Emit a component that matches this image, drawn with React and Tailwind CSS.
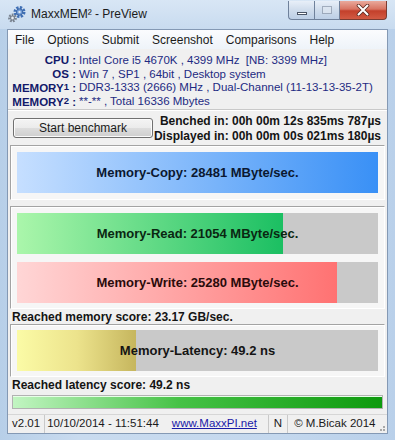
import React from 'react'

const sans = { fontFamily: '"Liberation Sans", Arial, sans-serif' }

function AppIcon() {
    return (
        <svg width="20" height="18" viewBox="0 0 20 18">
            <circle cx="12.5" cy="7" r="4.5" fill="none" stroke="#3f6fb5" strokeWidth="3" strokeDasharray="2.2 1.3" />
            <circle cx="12.5" cy="7" r="3.2" fill="#6f9ad6" stroke="#2f5a9a" strokeWidth="0.8" />
            <circle cx="12.5" cy="7" r="1.2" fill="#dce8f5" />
            <circle cx="5.5" cy="13" r="3.2" fill="none" stroke="#7b8592" strokeWidth="2.4" strokeDasharray="1.7 1.1" />
            <circle cx="5.5" cy="13" r="2.2" fill="#b8c0ca" stroke="#5d6672" strokeWidth="0.7" />
            <circle cx="5.5" cy="13" r="0.9" fill="#eef2f6" />
        </svg>
    )
}

function CaptionButtons() {
    return (
        <div className="mr-[8px] mt-[1px] flex h-[19px]">
            <div className="flex w-[26px] items-center justify-center rounded-bl-[4px] border border-r-0 border-t-0 border-[#6f819b] bg-[linear-gradient(to_bottom,#e8eff8,#cfdcec_50%,#bccfe6)]">
                <div className="mt-[6px] h-[3px] w-[10px] border border-[#4a5566] bg-white" />
            </div>
            <div className="flex w-[26px] items-center justify-center border border-t-0 border-[#6f819b] bg-[linear-gradient(to_bottom,#e8eff8,#cfdcec_50%,#bccfe6)]">
                <div className="h-[8px] w-[10px] border border-[#8a96a8] bg-[#dfe7f1] opacity-70" />
            </div>
            <div className="flex w-[47px] items-center justify-center rounded-br-[4px] border border-l-0 border-t-0 border-[#7a3b31] bg-[linear-gradient(to_bottom,#e9a99c,#d87462_45%,#c3402b_55%,#d25a43)]">
                <svg width="14" height="12" viewBox="0 0 14 12">
                    <path d="M2.5 1.5 L11.5 10.5 M11.5 1.5 L2.5 10.5" stroke="#5a2a22" strokeWidth="3.6" strokeLinecap="round" />
                    <path d="M2.5 1.5 L11.5 10.5 M11.5 1.5 L2.5 10.5" stroke="#ffffff" strokeWidth="2" strokeLinecap="round" />
                </svg>
            </div>
        </div>
    )
}

function InfoRow({ label, sup, value }) {
    return (
        <div className="flex h-[13.5px] items-center">
            <div className="w-[68px] shrink-0 text-right font-bold text-[#12196a]">
                {label}{sup && <span className="text-[9.5px] align-[2px]">{sup}</span>} :
            </div>
            <div className="whitespace-pre pl-[3px] text-[#1d2a82]">{value}</div>
        </div>
    )
}

function Bar({ label, bg, color }) {
    return (
        <div className={`flex h-[41px] items-center justify-center text-[13px] font-bold ${bg} ${color}`}>
            {label}
        </div>
    )
}

const panelCls = "mx-[2px] border border-b-white border-l-[#a3a3a3] border-r-white border-t-[#a3a3a3] bg-[#f6f6f6] px-[6px] shadow-[inset_1px_1px_0_#ffffff]"

export default function App() {
    return (
        <div style={sans} className="flex h-[440px] w-[395px] flex-col overflow-hidden bg-[linear-gradient(to_right,#b7cfe8,#c9dbef_20%,#c4d8ee_70%,#b9d0ea)] text-[#1a1a1a]">
            {/* title bar */}
            <div className="flex h-[29px] shrink-0 items-start justify-between bg-[linear-gradient(to_bottom,#d8e6f5,#c8dbef)]">
                <div className="flex items-center pl-[7px] pt-[5px]">
                    <AppIcon />
                    <span className="ml-[4px] text-[12px] text-[#1c1c1c]">MaxxMEM² - PreView</span>
                </div>
                <CaptionButtons />
            </div>

            {/* client */}
            <div className="mx-[7px] flex h-[405px] shrink-0 flex-col border border-[#8499b4] bg-[#f0f0f0]">
                {/* menu */}
                <div className="flex h-[19px] shrink-0 items-center gap-[13px] bg-[linear-gradient(to_bottom,#fbfcfe,#eef3f9)] pl-[7px] text-[12px] text-[#1a1a1a]">
                    <span>File</span>
                    <span>Options</span>
                    <span>Submit</span>
                    <span>Screenshot</span>
                    <span>Comparisons</span>
                    <span>Help</span>
                </div>

                {/* system info */}
                <div className="h-[61px] shrink-0 border-b border-[#c9c9c9] pt-[5px] text-[11.5px] leading-[13.5px] shadow-[0_1px_0_#ffffff]">
                    <InfoRow label="CPU" value="Intel Core i5 4670K , 4399 MHz  [NB: 3399 MHz]" />
                    <InfoRow label="OS" value="Win 7 , SP1 , 64bit , Desktop system" />
                    <InfoRow label="MEMORY" sup="1" value="DDR3-1333 (2666) MHz , Dual-Channel (11-13-13-35-2T)" />
                    <InfoRow label="MEMORY" sup="2" value="**-** , Total 16336 Mbytes" />
                </div>

                {/* benchmark row */}
                <div className="flex h-[35px] shrink-0 items-center justify-between pl-[5px] pr-[6px]">
                    <button className="h-[20px] w-[140px] shrink-0 rounded-[3px] border border-[#707070] bg-[linear-gradient(to_bottom,#f4f4f4,#ebebeb_50%,#dddddd_50%,#cfcfcf)] text-[12px] text-[#1a1a1a] shadow-[inset_0_0_0_1px_#fbfbfb]">
                        Start benchmark
                    </button>
                    <div className="whitespace-nowrap pt-[2px] text-right text-[12px] font-bold leading-[15px] text-[#141414]">
                        <div>Benched in: 00h 00m 12s 835ms 787µs</div>
                        <div>Displayed in: 00h 00m 00s 021ms 180µs</div>
                    </div>
                </div>

                {/* copy */}
                <div className={`${panelCls} h-[55px] shrink-0 py-[6px]`}>
                    <Bar label="Memory-Copy: 28481 MByte/sec." bg="bg-[linear-gradient(to_right,#c6dfff,#3990f6)]" color="text-[#0b1830]" />
                </div>

                {/* read / write */}
                <div className={`${panelCls} mt-[6px] flex h-[103px] shrink-0 flex-col gap-[8px] pb-[5px] pt-[6px]`}>
                    <Bar label="Memory-Read: 21054 MByte/sec." bg="bg-[linear-gradient(to_right,#abf6ab_0px,#1bbf62_266px,#c9c9c9_266px)]" color="text-[#0a2712]" />
                    <Bar label="Memory-Write: 25280 MByte/sec." bg="bg-[linear-gradient(to_right,#ffd6d6_0px,#ff7272_320px,#c9c9c9_320px)]" color="text-[#2a0b0b]" />
                </div>

                <div className="flex h-[15px] shrink-0 items-center pl-[4px] text-[12px] font-bold text-[#141414]">
                    Reached memory score: 23.17 GB/sec.
                </div>

                {/* latency */}
                <div className={`${panelCls} h-[53px] shrink-0 py-[5px]`}>
                    <Bar label="Memory-Latency: 49.2 ns" bg="bg-[linear-gradient(to_right,#fbfba6_0px,#ece38c_60px,#c6b65e_119px,#c9c9c9_119px)]" color="text-[#141414]" />
                </div>

                <div className="flex h-[16px] shrink-0 items-center pl-[4px] text-[12px] font-bold text-[#141414]">
                    Reached latency score: 49.2 ns
                </div>

                {/* progress */}
                <div className="mx-[4px] mt-[2px] h-[14px] shrink-0 border border-[#b2b2b2] bg-[linear-gradient(to_right,#c2f5c2,#46c246_45%,#0e9a0e)] shadow-[inset_0_1px_0_#e8ffe8]" />

                {/* status bar */}
                <div className="mt-[5px] flex h-[19px] shrink-0 items-center border-t border-[#d6d6d6] text-[11.5px] text-[#1a1a1a]">
                    <div className="flex h-full items-center border-r border-[#c9c9c9] pl-[4px] pr-[4px]">v2.01</div>
                    <div className="flex h-full items-center pl-[2px] pr-[13px]">10/10/2014 - 11:51:44</div>
                    <div className="flex h-full items-center border-r border-[#c9c9c9] pr-[11px] text-[#1a1aa8] underline">www.MaxxPI.net</div>
                    <div className="flex h-full items-center border-r border-[#c9c9c9] px-[5px]">N</div>
                    <div className="flex h-full items-center pl-[6px]">© M.Bicak 2014</div>
                    <div className="ml-auto mr-[2px] mt-[8px] grid grid-cols-3 gap-[1px]">
                        <span className="h-[2px] w-[2px]" />
                        <span className="h-[2px] w-[2px]" />
                        <span className="h-[2px] w-[2px] bg-[#a8a8a8]" />
                        <span className="h-[2px] w-[2px]" />
                        <span className="h-[2px] w-[2px] bg-[#a8a8a8]" />
                        <span className="h-[2px] w-[2px] bg-[#a8a8a8]" />
                    </div>
                </div>
            </div>
        </div>
    )
}
